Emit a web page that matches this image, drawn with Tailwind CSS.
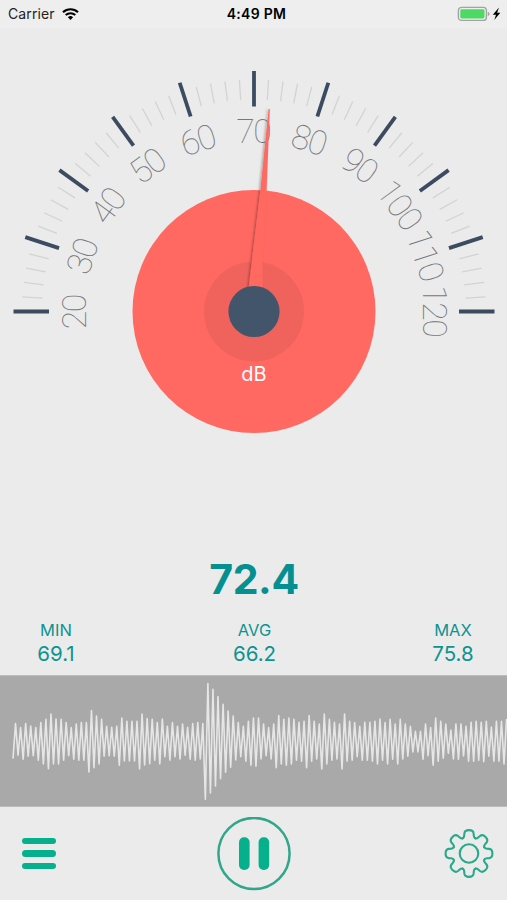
<!DOCTYPE html>
<html lang="en">
<head>
<meta charset="utf-8">
<title>Sound Meter</title>
<script src="https://cdn.jsdelivr.net/npm/@tailwindcss/browser@4"></script>
</head>
<body class="bg-[#ebebeb] font-['Inter',sans-serif]">
<div class="flex h-[900px] w-[507px] flex-col overflow-hidden">
  <header class="grid h-7 shrink-0 grid-cols-3 items-center bg-[#eeeeee] pl-2 pr-1.5 text-[14px] leading-7 text-black">
    <div class="flex items-center gap-[7px]">
      <span class="text-[#222] tracking-[0.1px]">Carrier</span>
      <svg class="h-3 w-[17px]" viewBox="0 0 17 12" fill="none" stroke="#000" stroke-width="2.1">
        <path d="M1 4.3a10.8 10.8 0 0 1 15 0"/>
        <path d="M3.7 7.1a7 7 0 0 1 9.6 0"/>
        <path d="M8.5 11.9 5.9 9.3a3.8 3.8 0 0 1 5.2 0z" fill="#000" stroke="none"/>
      </svg>
    </div>
    <div class="whitespace-nowrap pl-1 text-center font-semibold tracking-[0.3px]">4:49 PM</div>
    <div class="flex items-center justify-end">
      <svg class="h-4 w-11" viewBox="0 0 44 16">
        <rect x="1.4" y="1.4" width="28" height="13" rx="3.2" fill="#efefef" stroke="#a3a3a3" stroke-width="1.4"/>
        <rect x="3.3" y="3.3" width="24.2" height="9.2" rx="1.4" fill="#4cd964"/>
        <path d="M30.8 5.8q1.8 .6 1.8 2.1t-1.8 2.1z" fill="#a3a3a3"/>
        <path d="M42 1.6 35.8 8.7h3.2l-1.7 5.4 6-7.3h-3.2z" fill="#000"/>
      </svg>
    </div>
  </header>

  <main class="flex grow flex-col">
    <svg class="h-[422px] w-[507px] shrink-0" viewBox="0 28 507 422">
      <defs>
        <filter id="shade" x="-100%" y="-10%" width="300%" height="120%">
          <feDropShadow dx="-1.4" dy="0.5" stdDeviation="1.1" flood-color="#000" flood-opacity="0.3"/>
        </filter>
      </defs>
      <g id="minor" stroke="#d3d3d4" stroke-width="1.3"></g>
      <g id="major" stroke="#3c4b60" stroke-width="3.8"></g>
      <g id="labels" fill="#76787b" text-anchor="middle" class="font-['Roboto',sans-serif] text-[34px] font-thin tracking-[-1.6px]"></g>
      <circle cx="254" cy="311.5" r="121.5" fill="#ff6961"/>
      <circle cx="254" cy="311.5" r="50" fill="#f0635c"/>
      <path d="M269.8 109 266.6 190 262.6 262V290H248.4L260.4 190 268.6 109z" fill="#ff6961" filter="url(#shade)"/>
      <circle cx="254" cy="311.5" r="25.6" fill="#43556b"/>
      <text x="254" y="380.5" fill="#fff" text-anchor="middle" class="text-[20px]">dB</text>
    </svg>

    <section class="flex h-[225px] flex-col justify-end pb-2.5 text-[#0e9390]">
      <div class="pl-px text-center text-[41px] font-bold leading-[50px] tracking-[-0.4px] text-[#058f91]">72.4</div>
      <div class="mt-3.5 flex justify-between pl-4 pr-3.5 text-center">
        <div class="w-20"><div class="text-[16.5px] leading-6">MIN</div><div class="text-[20.5px] leading-[23px]">69.1</div></div>
        <div class="w-20"><div class="text-[16.5px] leading-6">AVG</div><div class="text-[20.5px] leading-[23px]">66.2</div></div>
        <div class="w-20"><div class="text-[16.5px] leading-6">MAX</div><div class="text-[20.5px] leading-[23px]">75.8</div></div>
      </div>
    </section>

    <svg class="h-[132px] w-[507px] shrink-0 bg-[#a9a9a9]" viewBox="0 0 507 132">
      <path d="M0 .5H507M0 131.5H507" stroke="#bcbcbc"/>
      <polyline id="wave" fill="none" stroke="#e6e6e6" stroke-width="1.6" stroke-linejoin="round"/>
    </svg>
  </main>

  <footer class="flex h-[93px] shrink-0 items-center justify-between pl-[22px] pr-[13px]">
    <div class="flex w-[50px] flex-col gap-[6.6px]">
      <span class="h-[6.2px] w-[33.5px] rounded-full bg-[#06b08d]"></span>
      <span class="h-[6.2px] w-[33.5px] rounded-full bg-[#06b08d]"></span>
      <span class="h-[6.2px] w-[33.5px] rounded-full bg-[#06b08d]"></span>
    </div>
    <div class="mr-2 flex size-[74px] items-center justify-center rounded-full">
      <svg class="size-[74px]" viewBox="0 0 74 74">
        <circle cx="37" cy="36.5" r="35.6" fill="none" stroke="#32a68a" stroke-width="2.5"/>
        <rect x="22" y="20.3" width="10.6" height="32.6" rx="5" fill="#06b08d"/>
        <rect x="41.6" y="20.3" width="10.6" height="32.6" rx="5" fill="#06b08d"/>
      </svg>
    </div>
    <svg class="size-[50px]" viewBox="-25 -24.5 50 50" fill="none" stroke="#28a98a" stroke-width="2.1" stroke-linecap="round">
      <circle r="9.3"/>
      <path id="tooth" d="M-6.3-15.2C-5.3-15.6-4.9-16.6-4.8-17.8L-4.6-20.2C-4.3-22.9-3-23.4 0-23.4S4.3-22.9 4.6-20.2L4.8-17.8C4.9-16.6 5.3-15.6 6.3-15.2"/>
      <use href="#tooth" transform="rotate(45)"/>
      <use href="#tooth" transform="rotate(90)"/>
      <use href="#tooth" transform="rotate(135)"/>
      <use href="#tooth" transform="rotate(180)"/>
      <use href="#tooth" transform="rotate(225)"/>
      <use href="#tooth" transform="rotate(270)"/>
      <use href="#tooth" transform="rotate(315)"/>
    </svg>
  </footer>
</div>
<script>
  const NS = 'http://www.w3.org/2000/svg';
  const CX = 254, CY = 311.5;
  const add = (parent, name, attrs) => {
    const el = document.createElementNS(NS, name);
    for (const k in attrs) el.setAttribute(k, attrs[k]);
    document.getElementById(parent).appendChild(el);
    return el;
  };
  // Dial: 20 to 120 dB over a half circle, one tick per 2 dB
  for (let i = 0; i <= 50; i++) {
    const turn = `rotate(${-90 + i * 3.6} ${CX} ${CY})`;
    const big = i % 5 === 0;
    add(big ? 'major' : 'minor', 'line', {
      x1: CX, x2: CX, y1: CY - (big ? 240.5 : 232), y2: CY - (big ? 205 : 212), transform: turn
    });
    if (big) add('labels', 'text', { x: CX - 0.8, y: CY - 168.5, transform: turn }).textContent = 20 + i * 2;
  }
  // Waveform: crest and trough levels, in thirds of a pixel
  const crests = [160,172,160,167,172,157,147,131,146,147,157,172,161,157,157,121,137,147,168,171,168,143,153,153,153,131,145,147,157,146,168,157,168,161,171,160,157,160,40,57,79,102,122,137,157,168,153,143,
    143,161,172,161,136,147,143,147,156,153,136,153,161,131,147,156,161,131,153,157,168,156,156,153,146,157,147,161,147,161,168,183,183,161,172,143,153,161,179,161,161,168,156,153,156,153,170,153,153,146];
  const troughs = [265,255,267,258,256,270,281,295,281,281,270,256,267,270,270,305,292,281,258,256,258,285,272,272,272,296,284,280,270,281,259,270,259,266,255,267,270,266,387,368,347,325,306,291,269,259,273,285,
    288,266,256,266,292,281,285,281,270,273,292,273,266,296,281,270,266,296,273,270,259,270,270,273,281,270,281,267,281,266,258,245,245,267,256,285,273,264,249,266,267,257,273,273,270,274,258,273,273,281];
  const step = 5.062;
  document.getElementById('wave').setAttribute('points', crests.map((c, i) =>
    `${13 + i * step},${troughs[i] / 3 - 4.7} ${13 + (i + 0.5) * step},${c / 3 - 4.7}`).join(' '));
</script>
</body>
</html>
